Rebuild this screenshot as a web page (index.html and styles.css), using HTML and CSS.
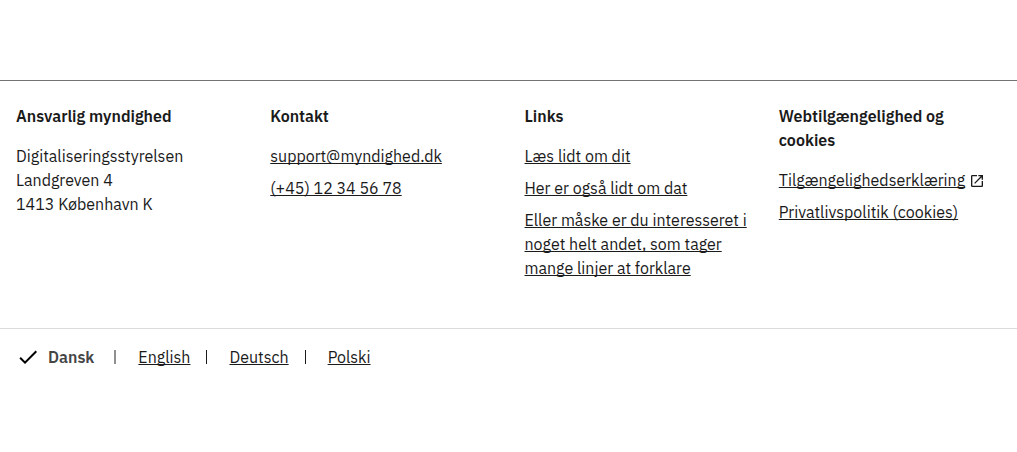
FILE: index.html
```html
<!DOCTYPE html>
<html lang="da">
<head>
<meta charset="utf-8">
<meta name="viewport" content="width=device-width, initial-scale=1">
<title>Sidefod</title>
<link rel="stylesheet" href="styles.css">
</head>
<body>
<footer class="footer">
  <div class="footer-columns">
    <section class="footer-column">
      <h2 class="footer-heading">Ansvarlig myndighed</h2>
      <address class="footer-address">Digitaliseringsstyrelsen<br>Landgreven 4<br>1413 København K</address>
    </section>
    <section class="footer-column">
      <h2 class="footer-heading">Kontakt</h2>
      <ul class="footer-links">
        <li><a class="link" href="mailto:support@myndighed.dk">support@myndighed.dk</a></li>
        <li><a class="link" href="tel:+4512345678">(+45) 12 34 56 78</a></li>
      </ul>
    </section>
    <section class="footer-column">
      <h2 class="footer-heading">Links</h2>
      <ul class="footer-links">
        <li><a class="link" href="#dit">Læs lidt om dit</a></li>
        <li><a class="link" href="#dat">Her er også lidt om dat</a></li>
        <li><a class="link" href="#andet">Eller måske er du interesseret i noget helt andet, som tager mange linjer at forklare</a></li>
      </ul>
    </section>
    <section class="footer-column">
      <h2 class="footer-heading">Webtilgængelighed og cookies</h2>
      <ul class="footer-links">
        <li class="external"><a class="link" href="#was">Tilgængelighedserklæring</a><svg class="external-icon" viewBox="0 0 24 24" aria-hidden="true"><path d="M19 19H5V5h7V3H5a2 2 0 0 0-2 2v14a2 2 0 0 0 2 2h14c1.100 0 2-.9 2-2v-7h-2v7zM14 3v2h3.590l-9.830 9.830 1.410 1.410L19 6.410V10h2V3h-7z"/></svg></li>
        <li><a class="link" href="#privatliv">Privatlivspolitik (cookies)</a></li>
      </ul>
    </section>
  </div>
  <nav class="languages" aria-label="Sprog">
    <ul class="language-list">
      <li class="language language-current" aria-current="true"><svg class="check-icon" viewBox="0 0 24 24" aria-hidden="true"><path d="M9 16.170 4.830 12l-1.420 1.410L9 19 21 7l-1.410-1.410z"/></svg>Dansk</li>
      <li class="language"><a class="link" href="#en" lang="en">English</a></li>
      <li class="language"><a class="link" href="#de" lang="de">Deutsch</a></li>
      <li class="language"><a class="link" href="#pl" lang="pl">Polski</a></li>
    </ul>
  </nav>
</footer>
</body>
</html>
```
FILE: styles.css
```css
* {
  box-sizing: border-box;
}

body {
  margin: 0;
  background: #fff;
  color: #1a1a1a;
  font-family: "IBM Plex Sans", "Noto Sans", sans-serif;
  font-size: 16px;
  font-weight: 400;
  line-height: 24px;
}

ul {
  margin: 0;
  padding: 0;
  list-style: none;
}

.footer {
  margin-top: 80px;
  border-top: 1px solid #747474;
}

.footer-columns {
  display: grid;
  grid-template-columns: repeat(4, minmax(0, 1fr));
  padding: 23px 0 48px;
}

.footer-column {
  padding: 0 16px;
}

.footer-heading {
  margin: 0 0 16px;
  font-size: 16px;
  font-weight: 600;
}

.footer-address {
  font-style: normal;
}

.footer-links {
  display: flex;
  flex-direction: column;
  gap: 8px;
}

.link {
  color: inherit;
  text-decoration: underline;
  text-decoration-thickness: 1px;
  text-decoration-skip-ink: none;
}

.external {
  display: flex;
  align-items: flex-end;
  gap: 4px;
}

.external-icon {
  flex: none;
  width: 16px;
  height: 16px;
  margin-bottom: 3px;
  fill: currentColor;
}

.languages {
  padding: 16px;
  border-top: 1px solid #dcdcdc;
}

.language-list {
  display: flex;
  flex-wrap: wrap;
}

.language {
  display: flex;
  align-items: center;
}

.language + .language::before {
  content: "";
  width: 1px;
  height: 14px;
  margin: 0 22px 0 16px;
  background: #1a1a1a;
}

.language-current + .language::before {
  width: 2px;
  margin-left: 20px;
  background: #909090;
}

.language-current {
  color: #454545;
  font-weight: 600;
}

.check-icon {
  width: 24px;
  height: 24px;
  margin-right: 8px;
  fill: #000;
}
```
